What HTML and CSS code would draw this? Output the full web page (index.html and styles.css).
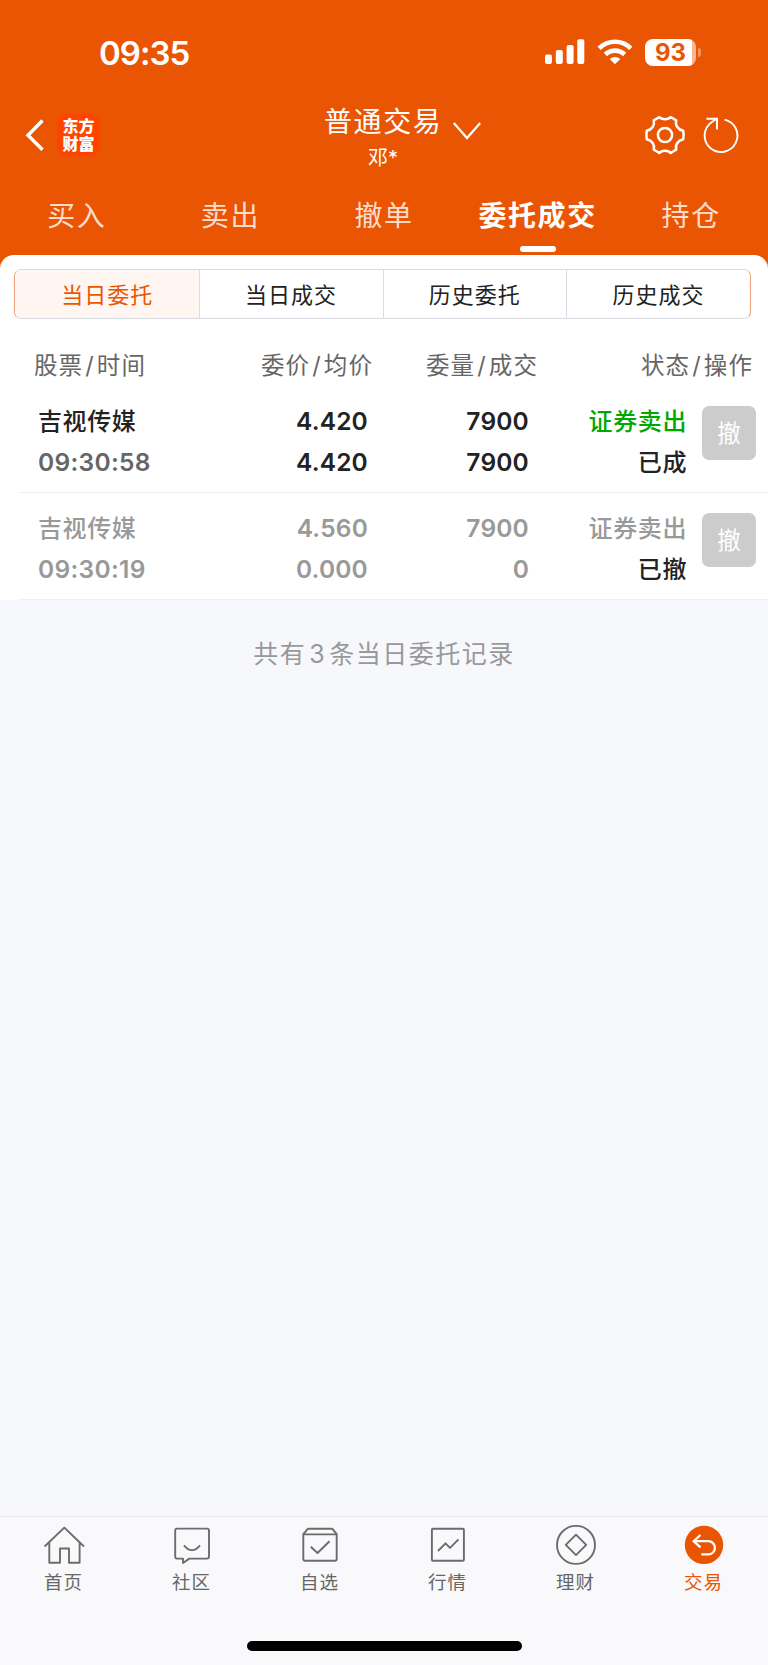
FILE: index.html
```html
<!DOCTYPE html>
<html lang="zh-CN">
<head>
    <meta charset="UTF-8">
    <meta name="viewport" content="width=device-width, initial-scale=1.0">
    <title>普通交易 - 委托成交</title>
    <link rel="stylesheet" href="styles.css">
</head>
<body>
    <header class="top">
        <div class="status-bar">
            <div class="status-time">09:35</div>
            <div class="status-icons">
                <svg class="signal" width="40" height="26" viewBox="0 0 40 26" fill="#fff">
                    <rect x="0" y="15.5" width="7" height="9.5" rx="2"/>
                    <rect x="10.8" y="11" width="7" height="14" rx="2"/>
                    <rect x="21.6" y="6" width="7" height="19" rx="2"/>
                    <rect x="32.3" y="0.3" width="7" height="24.7" rx="2"/>
                </svg>
                <svg class="wifi" width="36" height="26" viewBox="0 0 36 26">
                    <g fill="none" stroke="#fff" stroke-width="4.6">
                        <path d="M2.2 9.3a22.2 22.2 0 0 1 31.6 0"/>
                        <path d="M8.4 15.5a13.8 13.8 0 0 1 19.2 0"/>
                    </g>
                    <path d="M18 25.2l-5.3-5.2a7.8 7.8 0 0 1 10.6 0z" fill="#fff"/>
                </svg>
                <div class="battery"><span>93</span></div>
                <div class="battery-cap"></div>
            </div>
        </div>

        <div class="nav-bar">
            <div class="nav-left">
                <svg width="20" height="34" viewBox="0 0 20 34" fill="none" stroke="#fff" stroke-width="3.5">
                    <path d="M17.5 2.6L3 17.2L17.5 31.8"/>
                </svg>
                <div class="logo">东方<br>财富</div>
            </div>
            <div class="nav-title">
                <div class="title">普通交易</div>
                <div class="account">邓*</div>
            </div>
            <svg class="arrow-down" width="28" height="18" viewBox="0 0 28 18" fill="none" stroke="#fff" stroke-width="2.2">
                <path d="M0.8 1L14 16L27.2 1"/>
            </svg>
            <div class="nav-right">
                <svg width="42" height="42" viewBox="0 0 42 42" fill="none" stroke="#fff" stroke-width="2.5" stroke-linejoin="round">
                    <path d="M15.4 3C17.6 6 24.4 6 26.6 3L32.2 6.3C31 11.3 34 15.6 39.2 16.8Q40 21 39.2 25.2C34 26.4 31 30.7 32.2 35.7L26.6 39C24.4 36 17.6 36 15.4 39L9.8 35.7C11 30.7 8 26.4 2.8 25.2Q2 21 2.8 16.8C8 15.6 11 11.3 9.8 6.3Z"/>
                    <circle cx="21" cy="21" r="7.1"/>
                </svg>
                <svg width="40" height="42" viewBox="0 0 40 42" fill="none" stroke="#fff" stroke-width="1.9">
                    <path d="M23.5 5.6A16.4 16.4 0 1 1 10.6 8.2L15 5.2"/>
                    <path d="M5.5 4.8H16V15.5"/>
                </svg>
            </div>
        </div>

        <nav class="tabs">
            <a class="tab">买入</a>
            <a class="tab">卖出</a>
            <a class="tab">撤单</a>
            <a class="tab active">委托成交</a>
            <a class="tab">持仓</a>
        </nav>
    </header>

    <main class="panel">
        <div class="segments">
            <div class="segment selected">当日委托</div>
            <div class="segment">当日成交</div>
            <div class="segment">历史委托</div>
            <div class="segment">历史成交</div>
        </div>

        <div class="list-head">
            <div class="head-stock">股票<i>/</i>时间</div>
            <div class="head-price">委价<i>/</i>均价</div>
            <div class="head-amount">委量<i>/</i>成交</div>
            <div class="head-status">状态<i>/</i>操作</div>
        </div>

        <div class="order">
            <div class="col col-stock">
                <div class="name">吉视传媒</div>
                <div class="time">09:30:58</div>
            </div>
            <div class="col col-price">
                <div>4.420</div>
                <div>4.420</div>
            </div>
            <div class="col col-amount">
                <div>7900</div>
                <div>7900</div>
            </div>
            <div class="col col-status">
                <div class="name sell">证券卖出</div>
                <div class="name state">已成</div>
            </div>
            <button class="cancel">撤</button>
        </div>

        <div class="order cancelled">
            <div class="col col-stock">
                <div class="name">吉视传媒</div>
                <div class="time">09:30:19</div>
            </div>
            <div class="col col-price">
                <div>4.560</div>
                <div>0.000</div>
            </div>
            <div class="col col-amount">
                <div>7900</div>
                <div>0</div>
            </div>
            <div class="col col-status">
                <div class="name sell">证券卖出</div>
                <div class="name state">已撤</div>
            </div>
            <button class="cancel">撤</button>
        </div>
    </main>

    <div class="summary">共有<span>3</span>条当日委托记录</div>

    <footer class="bottom">
        <nav class="bottom-nav">
            <a class="bottom-item">
                <svg width="42" height="42" viewBox="0 0 42 42">
                    <path d="M1.6 21.5L21.3 2.6L41 21.5M6.3 17.5V37.8H17V23.5H26V37.8H36.6V17.5"/>
                </svg>
                <span>首页</span>
            </a>
            <a class="bottom-item">
                <svg width="42" height="42" viewBox="0 0 42 42">
                    <path d="M6 3.6H36Q38 3.6 38 5.6V31.6Q38 33.6 36 33.6H18.3L12 38V33.6H6Q4.2 33.6 4.2 31.6V5.6Q4.2 3.6 6 3.6Z"/>
                    <path d="M13 20.3Q21 30 29 20.3"/>
                </svg>
                <span>社区</span>
            </a>
            <a class="bottom-item">
                <svg width="42" height="42" viewBox="0 0 42 42">
                    <path d="M4.3 9.2L8.8 3.8H33.4L37.7 9.2V34Q37.7 35.7 36 35.7H6Q4.3 35.7 4.3 34ZM4.3 9.4H37.7"/>
                    <path d="M11.8 21.8L18.5 28L30.5 16.2"/>
                </svg>
                <span>自选</span>
            </a>
            <a class="bottom-item">
                <svg width="42" height="42" viewBox="0 0 42 42">
                    <rect x="4.9" y="3.8" width="32" height="32" rx="1"/>
                    <path d="M11 26L18.5 18.3L23 22.8L31.5 14.3"/>
                </svg>
                <span>行情</span>
            </a>
            <a class="bottom-item">
                <svg width="42" height="42" viewBox="0 0 42 42">
                    <circle cx="21" cy="19.9" r="19"/>
                    <path d="M21 9.7L31.2 19.9L21 30.1L10.8 19.9Z"/>
                </svg>
                <span>理财</span>
            </a>
            <a class="bottom-item current">
                <svg width="42" height="42" viewBox="0 0 42 42">
                    <circle class="dot" cx="21" cy="19.9" r="19.2"/>
                    <path class="back" d="M17.5 10L10.5 16.2L17.5 22.3M10.5 16.2H25.3A6.6 6.6 0 0 1 25.3 29.4H18.3"/>
                </svg>
                <span>交易</span>
            </a>
        </nav>
        <div class="home-indicator"></div>
    </footer>
</body>
</html>
```

FILE: styles.css
```css
* {
    box-sizing: border-box;
}

body {
    margin: 0;
    min-height: 1665px;
    display: flex;
    flex-direction: column;
    font-family: Inter, "Noto Sans CJK SC", sans-serif;
    background-color: #f7f8fb;
    color: #222;
}

svg {
    display: block;
    flex-shrink: 0;
}

/* 顶部 */
.top {
    background-color: #ea5504;
    height: 269px;
    color: #fff;
}

.status-bar {
    height: 104px;
    padding: 0 67px 0 99px;
    display: flex;
    justify-content: space-between;
    align-items: center;
}

.status-time {
    font-size: 33px;
    font-weight: 600;
    line-height: 40px;
    letter-spacing: -1px;
    padding-top: 1px;
}

.status-icons {
    display: flex;
    align-items: center;
}

.wifi {
    margin-left: 12px;
}

.battery {
    width: 51px;
    height: 27px;
    margin-left: 12px;
    border-radius: 8px;
    background: linear-gradient(to right, #fff 47px, #f6b48f 47px);
    color: #ea5504;
    font-size: 24px;
    font-weight: 700;
    line-height: 27px;
    text-align: center;
}

.battery-cap {
    width: 3px;
    height: 9px;
    margin-left: 2px;
    border-radius: 0 4px 4px 0;
    background-color: #f2935f;
}

.nav-bar {
    height: 76px;
    display: flex;
    align-items: flex-start;
}

.nav-left {
    width: 324px;
    padding: 10px 0 0 25px;
    display: flex;
    align-items: center;
}

.logo {
    width: 43px;
    height: 42px;
    margin-left: 12px;
    padding-top: 4px;
    border-radius: 9px;
    background-color: #ff4400;
    font-size: 16px;
    font-weight: 900;
    line-height: 17.5px;
    text-align: center;
}

.nav-title {
    width: 118px;
    padding-top: 1px;
    text-align: center;
}

.title {
    font-size: 28px;
    letter-spacing: 1.6px;
    line-height: 34px;
    white-space: nowrap;
}

.account {
    font-size: 20px;
    line-height: 38px;
}

.arrow-down {
    margin: 18px 0 0 11px;
}

.nav-right {
    margin: 10px 27px 0 auto;
    display: flex;
    gap: 15px;
}

.tabs {
    display: flex;
}

.tab {
    flex: 1;
    position: relative;
    height: 75px;
    font-size: 28px;
    line-height: 73px;
    letter-spacing: 1.6px;
    text-align: center;
    white-space: nowrap;
    color: #fcdccb;
}

.tab.active {
    color: #fff;
    font-weight: 600;
}

.tab.active::after {
    content: "";
    position: absolute;
    left: 50%;
    top: 66px;
    width: 36px;
    height: 6px;
    margin-left: -18px;
    border-radius: 3px;
    background-color: #fff;
}

/* 委托列表 */
.panel {
    position: relative;
    margin-top: -14px;
    padding-top: 14px;
    border-radius: 14px 14px 0 0;
    background-color: #fff;
}

.segments {
    display: flex;
    height: 50px;
    margin: 0 17px 0 14px;
    border: 1px solid #d9dce2;
    border-left-color: #f0a27c;
    border-right-color: #f0a27c;
    border-radius: 7px;
    overflow: hidden;
}

.segment {
    flex: 1 1 25%;
    border-left: 1px solid #d9dce2;
    font-size: 22px;
    line-height: 50px;
    letter-spacing: 1px;
    text-align: center;
}

.segment:first-child {
    border-left: none;
}

.segment.selected {
    padding-left: 1px;
    background-color: #fff5f1;
    color: #ea5504;
}

.list-head {
    display: flex;
    height: 67px;
    padding-left: 34px;
    font-size: 23.5px;
    line-height: 94px;
    letter-spacing: 1.1px;
    white-space: nowrap;
    color: #666;
}

.list-head i {
    font-style: normal;
    margin: 0 2px;
}

.head-stock {
    width: 227px;
}

.head-price {
    width: 165px;
}

.head-amount {
    width: 215px;
}

.order {
    display: flex;
    height: 107px;
    margin-left: 18px;
    padding: 15px 0 0 20px;
    border-bottom: 1px solid #f0f1f3;
    font-size: 24.5px;
    font-weight: 600;
    line-height: 41px;
    letter-spacing: 0.2px;
}

.col {
    text-align: right;
    white-space: nowrap;
}

.col-stock {
    width: 150px;
    text-align: left;
}

.col-price {
    width: 180px;
}

.col-amount {
    width: 161px;
}

.col-status {
    width: 158px;
}

.name {
    font-size: 24px;
    font-weight: 500;
    letter-spacing: 0.6px;
}

.time {
    color: #666;
    letter-spacing: 0.3px;
}

.sell {
    color: #00a800;
}

.cancel {
    width: 54px;
    height: 54px;
    margin: 5px 0 0 15px;
    padding: 0;
    border: none;
    border-radius: 7px;
    background-color: #ccc;
    color: #fff;
    font-family: inherit;
    font-size: 23.5px;
    line-height: 55px;
}

.cancelled,
.cancelled .time,
.cancelled .sell {
    color: #999;
}

.cancelled .state {
    color: #222;
}

.summary {
    padding-top: 34px;
    font-size: 25px;
    line-height: 41px;
    letter-spacing: 1.5px;
    text-align: center;
    color: #999;
}

.summary span {
    margin: 0 3px;
}

/* 底部导航 */
.bottom {
    height: 149px;
    margin-top: auto;
    border-top: 1px solid #ebebed;
    background-color: #f9f9fb;
}

.bottom-nav {
    display: flex;
    height: 124px;
    padding-top: 8px;
}

.bottom-item {
    flex: 1;
    display: flex;
    flex-direction: column;
    align-items: center;
    font-size: 18.5px;
    line-height: 31px;
    letter-spacing: 1px;
    color: #666;
}

.bottom-item span {
    margin-right: 1px;
}

.bottom-item svg {
    fill: none;
    stroke: #6c6c6c;
    stroke-width: 1.9;
    stroke-linejoin: round;
}

.bottom-item.current {
    color: #ea5504;
}

.bottom-item .dot {
    fill: #ea5504;
    stroke: none;
}

.bottom-item .back {
    stroke: #fff;
    stroke-width: 2.2;
}

.home-indicator {
    width: 275px;
    height: 10px;
    margin: 0 auto;
    border-radius: 5px;
    background-color: #000;
}
```
